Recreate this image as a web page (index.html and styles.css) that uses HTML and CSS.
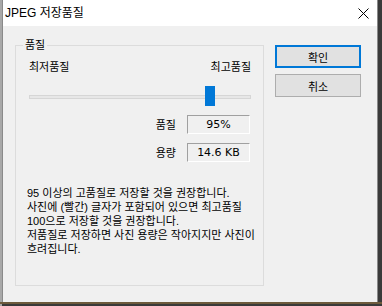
FILE: index.html
```html
<!DOCTYPE html>
<html lang="ko">

<head>
    <meta charset="UTF-8" />
    <title>JPEG 저장품질</title>
    <link rel="stylesheet" href="styles.css">
</head>

<body>
    <div class="desktop">
        <div class="dialog">
            <div class="titlebar">
                <span class="title">JPEG 저장품질</span>
                <svg class="close" width="11" height="11" viewBox="0 0 11 11">
                    <path d="M0.5 0.5 L10.5 10.5 M10.5 0.5 L0.5 10.5" stroke="#000" stroke-width="1" fill="none" />
                </svg>
            </div>

            <div class="client">
                <fieldset class="group">
                    <legend>품질</legend>

                    <div class="range-labels">
                        <span>최저품질</span>
                        <span>최고품질</span>
                    </div>

                    <div class="slider">
                        <div class="track"></div>
                        <div class="thumb" style="left: 176px"></div>
                    </div>

                    <div class="field-row">
                        <span class="field-label">품질</span>
                        <div class="field-box">95%</div>
                    </div>
                    <div class="field-row">
                        <span class="field-label">용량</span>
                        <div class="field-box">14.6 KB</div>
                    </div>

                    <p class="note">
                        95 이상의 고품질로 저장할 것을 권장합니다.<br>
                        사진에 (빨간) 글자가 포함되어 있으면 최고품질<br>
                        100으로 저장할 것을 권장합니다.<br>
                        저품질로 저장하면 사진 용량은 작아지지만 사진이<br>
                        흐려집니다.
                    </p>
                </fieldset>

                <div class="buttons">
                    <button type="button" class="btn btn-default">확인</button>
                    <button type="button" class="btn">취소</button>
                </div>
            </div>
        </div>
        <div class="taskbar-edge"></div>
    </div>
</body>

</html>
```

FILE: styles.css
```css
* {
    box-sizing: border-box;
}

body {
    margin: 0;
    font-family: "Liberation Sans", "Noto Sans CJK KR", sans-serif;
    font-size: 11px;
    color: #000;
    background-color: #3a3a3a;
}

.desktop {
    width: 382px;
    height: 306px;
    overflow: hidden;
    background: linear-gradient(to right, #a8a8a8 0, #a8a8a8 2px, #3a3a3a 2px);
}

.dialog {
    margin-left: 2px;
    width: 376px;
    height: 302px;
    background-color: #f0f0f0;
    border-left: 1px solid #8a8a8a;
    border-right: 1px solid #8a8a8a;
}

.taskbar-edge {
    height: 2px;
    background-color: #6e5a3c;
}

/* title bar */
.titlebar {
    height: 26px;
    background-color: #fff;
    display: flex;
    align-items: center;
    justify-content: space-between;
    padding: 0 8px 0 2px;
}

.title {
    font-size: 12px;
    line-height: 14px;
}

.close {
    display: block;
    margin-top: 1px;
}

/* client area */
.client {
    display: flex;
    align-items: flex-start;
    padding-left: 12px;
}

.group {
    flex: none;
    width: 249px;
    min-width: 0;
    margin: 12px 0 0;
    padding: 8px 11px 29px;
    border: 1px solid #dcdcdc;
}

.group legend {
    padding: 0 2px;
    margin-left: -4px;
    line-height: 14px;
}

.range-labels {
    display: flex;
    justify-content: space-between;
    line-height: 14px;
    padding: 0 1px 0 2px;
}

.slider {
    position: relative;
    height: 20px;
    margin: 12px 1px 0 2px;
    display: flex;
    align-items: center;
}

.track {
    width: 100%;
    height: 4px;
    margin-top: 2px;
    background-color: #e7e7e7;
    border: 1px solid #d6d6d6;
}

.thumb {
    position: absolute;
    top: 0;
    width: 10px;
    height: 20px;
    background-color: #0078d7;
}

.field-row {
    display: flex;
    justify-content: flex-end;
    align-items: center;
    gap: 11px;
    margin-top: 9px;
    padding-right: 2px;
}

.field-label {
    line-height: 14px;
}

.field-box {
    width: 63px;
    height: 19px;
    line-height: 17px;
    text-align: center;
    font-family: "DejaVu Sans", "Noto Sans CJK KR", sans-serif;
    font-size: 11px;
    border-top: 1px solid #a0a0a0;
    border-left: 1px solid #a0a0a0;
    border-bottom: 1px solid #fff;
    border-right: 1px solid #fff;
}

.note {
    margin: 24px 0 0;
    line-height: 14px;
    white-space: nowrap;
}

/* buttons */
.buttons {
    display: flex;
    flex-direction: column;
    gap: 6px;
    margin: 19px 0 0 11px;
}

.btn {
    width: 86px;
    height: 23px;
    padding: 0;
    font-family: "Liberation Sans", "Noto Sans CJK KR", sans-serif;
    font-size: 11px;
    color: #000;
    background-color: #e1e1e1;
    border: 1px solid #adadad;
}

.btn-default {
    border: 2px solid #0078d7;
}
```
